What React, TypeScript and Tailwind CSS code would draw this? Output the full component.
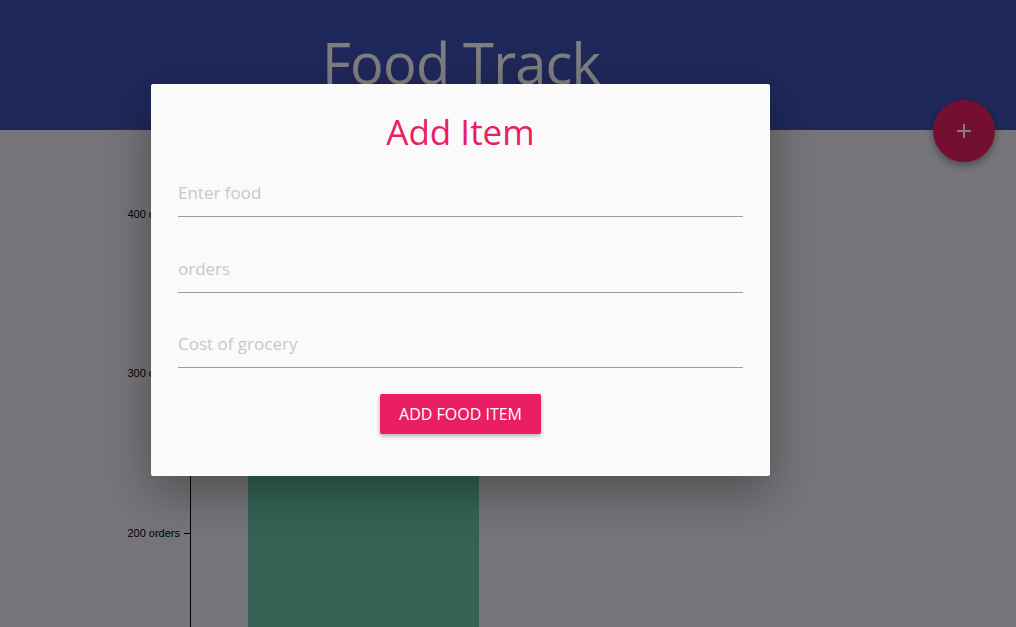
import React from "react";

export default function App() {
  const font = { fontFamily: '"Open Sans", "Noto Sans", sans-serif' };
  return (
    <div className="relative w-[1016px] h-[627px] overflow-hidden bg-[#ededf5]" style={font}>
      {/* header */}
      <div className="h-[130px] bg-[#3f51b5] flex justify-start">
        <h1 className="ml-[322px] mt-[22px] text-[56px] leading-[80px] font-normal text-white tracking-[-0.8px]">
          Food Track
        </h1>
      </div>

      {/* chart */}
      <svg className="block" width="1016" height="497" viewBox="0 130 1016 497">
        <rect x="248" y="300" width="231" height="327" fill="#69c6aa" />
        <line x1="190.5" y1="160" x2="190.5" y2="627" stroke="#000" strokeWidth="1" />
        {[214, 373, 533].map((y, i) => (
          <g key={y}>
            <line x1="184" y1={y + 0.5} x2="190" y2={y + 0.5} stroke="#000" strokeWidth="1" />
            <text
              x="180"
              y={y + 4}
              textAnchor="end"
              fontSize="11"
              fill="#000"
              style={{ fontFamily: '"Liberation Sans", Arial, sans-serif' }}
            >
              {["400 orders", "300 orders", "200 orders"][i]}
            </text>
          </g>
        ))}
      </svg>

      {/* FAB */}
      <button className="absolute left-[933px] top-[100px] w-[62px] h-[62px] rounded-full bg-[#e91e63] shadow-[0_3px_8px_rgba(0,0,0,0.4)] flex items-center justify-center">
        <svg width="16" height="16" viewBox="0 0 16 16">
          <path d="M8 1v14M1 8h14" stroke="#fff" strokeWidth="2" />
        </svg>
      </button>

      {/* overlay */}
      <div className="absolute inset-0 bg-black/50" />

      {/* modal */}
      <div className="absolute left-[151px] top-[84px] w-[619px] h-[392px] bg-[#fafafa] rounded-[2px] shadow-[0_16px_50px_rgba(0,0,0,0.35)] px-[27px] pt-[20px] flex flex-col">
        <h2 className="h-[56px] leading-[56px] text-center text-[35px] text-[#e91e63] font-normal">
          Add Item
        </h2>
        {["Enter food", "orders", "Cost of grocery"].map((p, i) => (
          <input
            key={p}
            placeholder={p}
            className={`${i === 0 ? "mt-[24px]" : i === 1 ? "mt-[43px]" : "mt-[42px]"} h-[33px] w-full bg-transparent border-0 border-b border-[#9e9e9e] outline-none pb-[15px] pt-0 text-[17px] leading-[18px] text-[#333] placeholder:text-[#c8c8c8]`}
            style={font}
          />
        ))}
        <div className="mt-[26px] flex justify-center">
          <button className="w-[161px] h-[40px] rounded-[2px] bg-[#e91e63] text-white text-[16px] uppercase shadow-[0_2px_4px_rgba(0,0,0,0.3)]">
            Add Food Item
          </button>
        </div>
      </div>
    </div>
  );
}
